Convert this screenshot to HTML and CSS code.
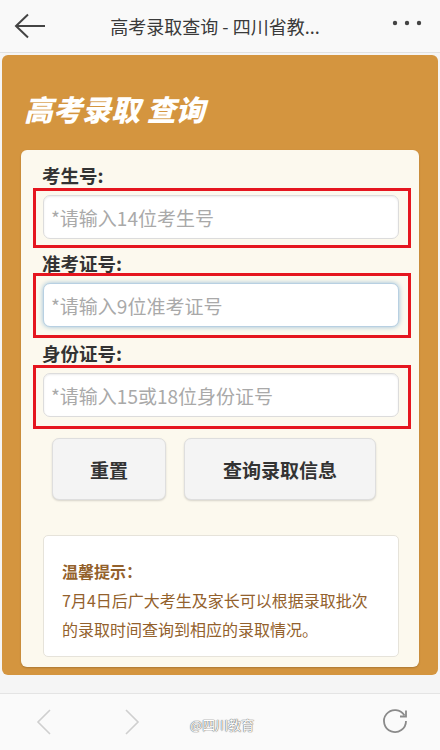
FILE: index.html
```html
<!DOCTYPE html>
<html lang="zh-CN">
<head>
<meta charset="utf-8">
<title>高考录取查询 - 四川省教育</title>
<link rel="stylesheet" href="styles.css">
</head>
<body>
<header class="topbar">
  <svg class="back" width="32" height="26" viewBox="0 0 32 26"><path d="M2 13H31M14 1.5L2 13L14 24.5" fill="none" stroke="#444" stroke-width="2"/></svg>
  <div class="topbar-title">高考录取查询 - 四川省教...</div>
  <svg class="more" width="30" height="6" viewBox="0 0 30 6"><circle cx="3" cy="3" r="2.2" fill="#444"/><circle cx="15" cy="3" r="2.2" fill="#444"/><circle cx="27" cy="3" r="2.2" fill="#444"/></svg>
</header>
<main class="page">
  <section class="panel">
    <h1 class="panel-title">高考录取 查询</h1>
    <div class="card">
      <div class="label label-first">考生号:</div>
      <div class="mark mark-1"><input class="field" type="text" placeholder="*请输入14位考生号"></div>
      <div class="label">准考证号:</div>
      <div class="mark mark-2"><input class="field field-focus" type="text" placeholder="*请输入9位准考证号"></div>
      <div class="label label-third">身份证号:</div>
      <div class="mark mark-3"><input class="field" type="text" placeholder="*请输入15或18位身份证号"></div>
      <div class="buttons">
        <button class="btn btn-reset">重置</button>
        <button class="btn btn-query">查询录取信息</button>
      </div>
      <div class="notice">
        <div class="notice-title">温馨提示：</div>
        <div class="notice-text">7月4日后广大考生及家长可以根据录取批次的录取时间查询到相应的录取情况。</div>
      </div>
    </div>
  </section>
</main>
<footer class="bottombar">
  <svg class="nav nav-back" width="16" height="26" viewBox="0 0 16 26"><path d="M14 1L2 13L14 25" fill="none" stroke="#cfcfcf" stroke-width="1.6"/></svg>
  <svg class="nav nav-fwd" width="16" height="26" viewBox="0 0 16 26"><path d="M2 1L14 13L2 25" fill="none" stroke="#cfcfcf" stroke-width="1.6"/></svg>
  <span class="spacer"></span>
  <svg class="nav refresh" width="28" height="28" viewBox="0 0 28 28"><path d="M23.5 8.5A11 11 0 1 0 25 14" fill="none" stroke="#8a8a8a" stroke-width="1.8"/><path d="M25 3.5V9.5H19" fill="none" stroke="#8a8a8a" stroke-width="1.8"/></svg>
  <span class="watermark">@四川教育</span>
</footer>
</body>
</html>
```
FILE: styles.css
```css
* { box-sizing: border-box; }
html, body { margin: 0; padding: 0; }
body {
  width: 440px;
  height: 750px;
  overflow: hidden;
  background: #f5f5f5;
  font-family: "Noto Sans CJK SC", "Noto Sans", sans-serif;
  color: #333;
}
.topbar {
  height: 53px;
  background: #f9f9f9;
  border-bottom: 1px solid #e2e2e2;
  display: flex;
  align-items: center;
  position: relative;
}
.back { margin-left: 14px; }
.topbar-title {
  flex: 1;
  text-align: center;
  font-size: 18px;
  color: #3a3a3a;
  margin-right: 8px;
}
.more { margin-right: 18px; margin-top: -6px; }
.page { padding: 2px 2px 18px; }
.panel {
  background: #d4953f;
  border-radius: 6px;
  height: 620px;
  padding: 0 19px 8px;
}
.panel-title {
  margin: 0;
  padding: 33px 0 0 3px;
  height: 95px;
  font-size: 29px;
  line-height: 40px;
  font-weight: 900;
  font-style: italic;
  color: #fff;
}
.card {
  background: #fcf9ee;
  border-radius: 6px;
  box-shadow: 0 1px 2px rgba(0,0,0,0.2);
  height: 517px;
  padding: 15px 8px 0 12px;
}
.label {
  font-size: 18.5px;
  font-weight: 700;
  line-height: 20px;
  margin: 5px 0 0 9px;
  color: #333;
}
.label-first { margin-top: 0; margin-bottom: 3px; }
.label-third { margin-bottom: 2px; }
.mark {
  border: 3px solid #e5161f;
  padding: 4px 9px 6px 7px;
}
.mark-2 { padding: 7px 9px 8px 7px; }
.mark-3 { padding: 5px 9px 9px 7px; }
.field {
  display: block;
  width: 100%;
  height: 44px;
  border: 1px solid #dcdcdc;
  border-radius: 7px;
  background: #fff;
  box-shadow: inset 0 1px 2px rgba(0,0,0,0.08);
  padding: 0 7px;
  font-family: "Noto Sans CJK SC", sans-serif;
  font-size: 19px;
  color: #333;
  outline: none;
}
.field::placeholder { color: #a9a9a9; }
.field-focus {
  border-color: #b8d0e2;
  box-shadow: 0 0 5px #98bfd9;
}
.buttons {
  display: flex;
  gap: 18px;
  margin: 9px 0 0 19px;
}
.btn {
  height: 62px;
  border: 1px solid #dedede;
  border-radius: 7px;
  background: #f4f4f4;
  box-shadow: 0 1px 2px rgba(0,0,0,0.15);
  font-family: inherit;
  font-size: 19px;
  font-weight: 700;
  color: #333;
  padding: 0;
}
.btn-reset { width: 114px; }
.btn-query { width: 192px; }
.notice {
  margin: 35px 12px 0 10px;
  height: 122px;
  background: #fff;
  border: 1px solid #e6e3da;
  border-radius: 5px;
  padding: 21px 24px 0 18px;
  color: #93612c;
  font-size: 16px;
  line-height: 29px;
}
.notice-title { font-weight: 700; }
.bottombar {
  height: 57px;
  background: #fafafa;
  border-top: 1px solid #e4e4e4;
  display: flex;
  align-items: center;
  position: relative;
}
.nav-back { margin-left: 36px; }
.nav-fwd { margin-left: 72px; }
.spacer { flex: 1; }
.refresh { margin-right: 31px; margin-top: -2px; }
.watermark {
  position: absolute;
  left: 190px;
  top: 23px;
  font-size: 13px;
  line-height: 16px;
  color: #fff;
  text-shadow: 0 0 1px #777, 0 0 1px #777, 0 0 1px #777;
}
```
